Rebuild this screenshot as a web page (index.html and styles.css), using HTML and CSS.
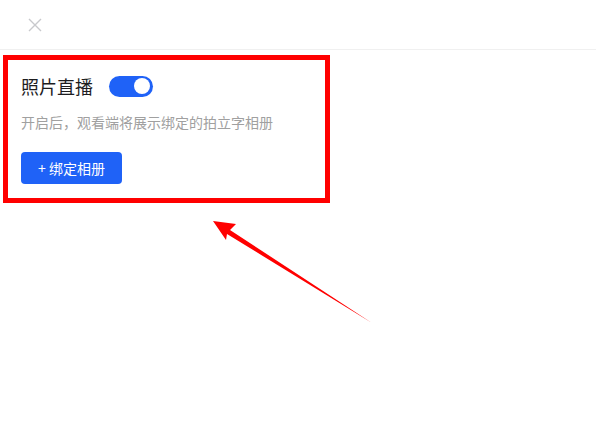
FILE: index.html
```html
<!DOCTYPE html>
<html lang="zh-CN">
<head>
    <meta charset="UTF-8">
    <title>照片直播</title>
    <link rel="stylesheet" href="styles.css">
</head>
<body>
    <div class="header">
        <svg class="close-icon" width="14" height="14" viewBox="0 0 14 14">
            <path d="M1 1 L13 13 M13 1 L1 13" stroke="#c8c9cc" stroke-width="1.4" fill="none"/>
        </svg>
    </div>
    <div class="content">
        <div class="panel">
            <div class="panel-title">
                <span>照片直播</span>
                <div class="switch"><div class="switch-knob"></div></div>
            </div>
            <p class="panel-desc">开启后，观看端将展示绑定的拍立字相册</p>
            <button class="bind-button">+ 绑定相册</button>
        </div>
    </div>
    <svg class="arrow" width="596" height="431" viewBox="0 0 596 431">
        <polygon points="213,221 236,224 230,230 372,323 227,234 226,240" fill="#ff0000"/>
    </svg>
</body>
</html>
```

FILE: styles.css
```css
* {
    margin: 0;
    padding: 0;
    box-sizing: border-box;
}
body {
    font-family: "Noto Sans CJK SC", "Noto Sans", sans-serif;
    background-color: #fff;
    width: 596px;
    height: 431px;
    position: relative;
    overflow: hidden;
}
.header {
    height: 50px;
    border-bottom: 1px solid #f0f0f0;
    padding: 18px 0 0 28px;
}
.close-icon {
    display: block;
}
.content {
    padding: 5px 0 0 3px;
}
.panel {
    width: 327px;
    height: 148px;
    border: 5px solid #ff0000;
    padding: 13px 0 0 13px;
}
.panel-title {
    display: flex;
    align-items: center;
    font-size: 18px;
    color: #1d1d1f;
    height: 26px;
}
.switch {
    width: 44px;
    height: 21px;
    border-radius: 11px;
    background-color: #1f62f7;
    margin-left: 16px;
    display: flex;
    align-items: center;
    justify-content: flex-end;
    padding-right: 3px;
}
.switch-knob {
    width: 16px;
    height: 16px;
    border-radius: 50%;
    background-color: #fff;
}
.panel-desc {
    font-size: 14px;
    color: #a0a0a0;
    margin-top: 13px;
    line-height: 20px;
}
.bind-button {
    margin-top: 20px;
    width: 101px;
    height: 32px;
    border: none;
    border-radius: 4px;
    background-color: #1f62f7;
    color: #fff;
    font-family: inherit;
    font-size: 14px;
}
.arrow {
    position: absolute;
    top: 0;
    left: 0;
}
```
